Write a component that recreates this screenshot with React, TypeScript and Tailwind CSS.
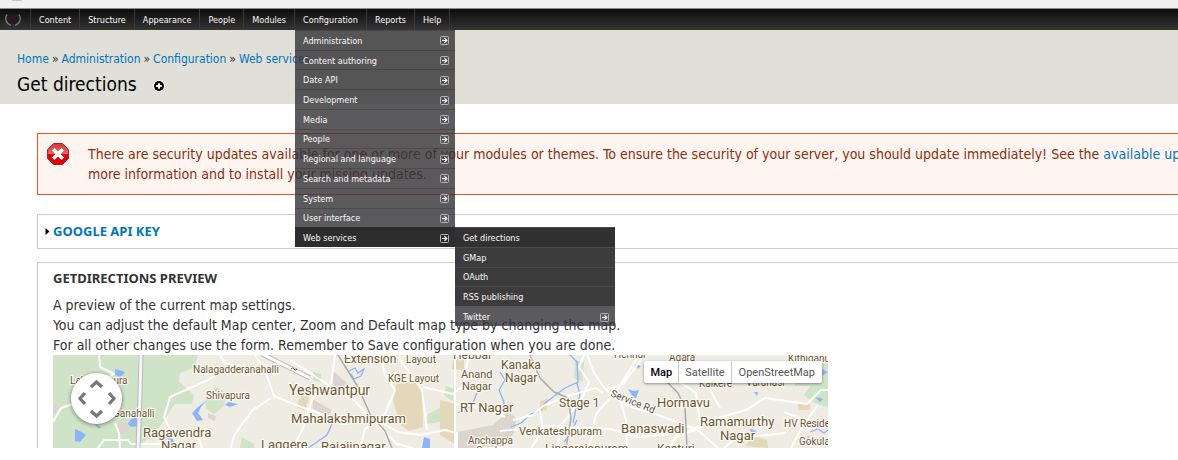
import React from "react";

const topItems = ["Content", "Structure", "Appearance", "People", "Modules", "Configuration", "Reports", "Help"];

const configItems = [
  "Administration",
  "Content authoring",
  "Date API",
  "Development",
  "Media",
  "People",
  "Regional and language",
  "Search and metadata",
  "System",
  "User interface",
  "Web services",
];

const serviceItems = ["Get directions", "GMap", "OAuth", "RSS publishing", "Twitter"];

const crumbs = ["Home", "Administration", "Configuration", "Web services"];

function Arrow() {
  return (
    <svg className="size-[9px] shrink-0" viewBox="0 0 9 9" fill="none" aria-hidden="true">
      <rect x="0.5" y="0.5" width="8" height="8" rx="1" stroke="#b4b4b6" />
      <path d="M2 4.5h4" stroke="#fff" />
      <path d="M4.5 2.2 6.8 4.5 4.5 6.8" stroke="#fff" strokeWidth="1.1" />
    </svg>
  );
}

function ServicesMenu() {
  return (
    <ul className="absolute bottom-0 left-full grid h-[99px] w-40 translate-y-[79px] grid-rows-5">
      {serviceItems.map((item, i) => (
        <li
          key={item}
          className={
            "flex border-t " +
            (i === 0
              ? "border-[#484848] bg-[#2d2d2d]/98"
              : i === 4
                ? "border-[#5a5a5c] bg-[#323236]/80"
                : "border-[#4c4c4c] bg-[#383838]/98")
          }
        >
          <a href="#" className="flex grow items-center justify-between pt-px pr-1.5 pl-2">
            {item}
            {i === 4 && <Arrow />}
          </a>
        </li>
      ))}
    </ul>
  );
}

function ConfigMenu() {
  return (
    <ul className="absolute top-full left-0 z-10 grid h-[217px] w-40 grid-rows-11">
      {configItems.map((item, i) => {
        const open = i === 10;
        return (
          <li
            key={item}
            className={
              "relative flex border-t " +
              (open ? "border-[#2d2d2d] bg-[#2d2d2d]" : "border-[#3c3c3e]/50 bg-[#323236]/80")
            }
          >
            <a href="#" className="flex grow items-center justify-between pt-px pr-1.5 pl-2">
              {item}
              <Arrow />
            </a>
            {open && <ServicesMenu />}
          </li>
        );
      })}
    </ul>
  );
}

function AdminBar() {
  return (
    <nav className="flex h-[21px] bg-linear-to-b from-[#0d0d0d] to-[#363636] text-[9px] leading-4 text-[#fafafa]">
      <a href="#" aria-label="Home" className="flex w-[30px] items-center pl-[5px]">
        <svg className="h-3 w-4" viewBox="0 0 16 12" fill="none" aria-hidden="true">
          <path d="M3 1h10v4c0 3-2 5-5 5s-5-2-5-5z" fill="#221c22" />
          <path d="M2.2 0.5C-0.6 4 0.6 9.5 6 11.3M13.8 0.5C16.6 4 15.4 9.5 10 11.3" stroke="#777777" strokeWidth="1.3" />
        </svg>
      </a>
      <ul className="flex border-r border-[#3a3a3a]">
        {topItems.map((item) => (
          <li key={item} className="relative flex border-l border-[#3a3a3a]">
            <a href="#" className="flex items-center px-2">
              {item}
            </a>
            {item === "Configuration" && <ConfigMenu />}
          </li>
        ))}
      </ul>
    </nav>
  );
}

function PageHeader() {
  return (
    <header className="h-[74px] bg-[#e0e0d8] px-[17px] pt-5">
      <p className="flex gap-[3px] text-[12px] leading-[18px] text-[#333]">
        {crumbs.map((c, i) => (
          <React.Fragment key={c}>
            {i > 0 && <span>»</span>}
            <a href="#" className="text-[#0074bd]">
              {c}
            </a>
          </React.Fragment>
        ))}
      </p>
      <div className="flex items-center gap-4 pt-1">
        <h1 className="text-[19px] leading-6 text-black">Get directions</h1>
        <button type="button" aria-label="Add to shortcuts" className="pt-1">
          <svg className="size-3" viewBox="0 0 12 12" aria-hidden="true">
            <circle cx="6" cy="6" r="6" fill="#fff" />
            <circle cx="6" cy="6" r="5" fill="#000" />
            <path d="M6 3.2v5.6M3.2 6h5.6" stroke="#fff" strokeWidth="2" />
          </svg>
        </button>
      </div>
    </header>
  );
}

function ErrorIcon() {
  return (
    <svg className="mt-[9px] size-[22px] shrink-0" viewBox="0 0 22 22" aria-hidden="true">
      <defs>
        <linearGradient id="stop" x1="0" y1="0" x2="0" y2="1">
          <stop offset="0" stopColor="#d23a3a" />
          <stop offset="0.5" stopColor="#e06a6a" />
          <stop offset="0.52" stopColor="#cf0d0d" />
          <stop offset="1" stopColor="#e00000" />
        </linearGradient>
      </defs>
      <path d="M6.6.5h8.8l6.1 6.1v8.8l-6.1 6.1H6.6L.5 15.4V6.6z" fill="url(#stop)" stroke="#c41a1a" />
      <path d="m6.2 6.2 9.6 9.6m0-9.6-9.6 9.6" stroke="#fff" strokeWidth="3.6" />
    </svg>
  );
}

type Label = [string, number, number, number];

const labels: Label[] = [
  ["Nalagadderanahalli", 193, 373, 10],
  ["Shivapura", 206, 398.5, 10],
  ["Lakshmipura", 70, 384, 10],
  ["Ganahalli", 113, 416.5, 10],
  ["Ragavendra", 143, 437, 13],
  ["Nagar", 161, 450, 13],
  ["Extension", 344, 362.5, 12],
  ["Layout", 406, 363, 10],
  ["KGE Layout", 388, 381.5, 10],
  ["Yeshwantpur", 289, 395, 14],
  ["Mahalakshmipuram", 291, 423, 13],
  ["Laggere", 261, 449, 13],
  ["Rajajinagar", 321, 451, 13],
  ["Hebbal", 453, 358.5, 12],
  ["Kanaka", 501, 369, 12],
  ["Nagar", 505, 382, 12],
  ["Anand", 461, 378, 11],
  ["Nagar", 462, 390, 11],
  ["RT Nagar", 460, 411.5, 13],
  ["Stage 1", 559, 406.5, 12],
  ["Venkateshpuram", 519, 434.5, 11],
  ["Anchappa", 468, 444, 10],
  ["Garden", 476, 454, 10],
  ["Lingarajapuram", 545, 453, 12],
  ["Hennur", 614, 358, 10],
  ["Agara", 669, 361, 10],
  ["Kithiganur", 788, 362, 10],
  ["Kalkere", 699, 387, 10],
  ["Varanasi", 746, 386, 10],
  ["Hormavu", 657, 406.5, 13],
  ["Banaswadi", 621, 433, 13],
  ["Ramamurthy", 700, 426, 13],
  ["Nagar", 720, 440, 13],
  ["HV Residency", 784, 427, 10],
  ["Gokula", 799, 445, 10],
  ["Kasturi", 657, 453, 12],
];

function MapDrawing() {
  return (
    <svg
      className="block h-[93px] w-full bg-[#efece3]"
      viewBox="53 355 775 93"
      preserveAspectRatio="xMinYMin slice"
      fill="none"
      role="img"
      aria-label="Map of Bangalore"
    >
      <g fill="#cfe3c6">
        <path d="M53 355h85v93H53z" />
        <path d="M142 355h56l-4 13-14 5-1 9 15 13-2 9-17 0-11 16-8 12-17 14-9 2zM205 395l12-8 10 7-3 12-10 8-8-5zM811 355h17v52l-14-4-10-8 7-10zM795 362h18v24h-18zM428 414l12-6v14l-13 2zM53 440l18 8H53zM242 437l12 7 0 4h-14zM313 372l8 2v8l-8-2zM446 386l8 3-1 12-9-6zM575 360l9 2-2 20-8-4z" />
      </g>
      <g fill="#e3d9b8">
        <path d="M396 384l18-3 8 6 1 40-14 4-8-6-5-14-3-10zM301 396l8 1-4 14-9-4zM453 358l11 2v10l-12-1zM440 400l15 4v40l-15-9zM540 402l8-4-1 12-7 2zM745 446l8-10 14 4 1 8zM798 404h12v6h-12z" />
      </g>
      <g fill="#dcd5ce">
        <path d="M332 370l16 14 9 13-14-3-10-9zM53 402l6 4-2 8-4-1zM118 423h11v10h-11zM493 425l15-13 8 6-2 15-14 15h-44l1-16 11-2zM312 399l20 11-3 6-16-7zM208 413l8 3-1 5-7-3zM658 371l24-1 7 9-14 2z" />
      </g>
      <g fill="#8bb4ff">
        <path d="M115 369l8 2 2 2-5 4-5-2zM75 429l7 3 4 3-6 7-5-1zM130 420l5-3 4 2v7l-8 1-3-3zM207 400l-9 7-6 6 5 8 6-1-5-7 3-6zM228 402l10 2-8 3-5-2zM424 437l6 2v9h-8zM94 423l7 4-2 2zM168 438l5 1 2 7-6-1zM628 389l5 2 6-1-3 8-3-1zM754 392l4 0-1 4zM815 397l8 2-3 3zM635 364l6 2-3 3zM820 368l8 4-6 4zM750 429l7 2-6 2zM690 402l6 2-4 3z" />
      </g>
      <g stroke="#8bb4ff" strokeWidth="1.3">
        <path d="M349 371l6-3 3 5 6-4-3 7-7 3-3-5M332 424l-5 11-10 7-9 6M500 372l5 8-6 10 5 12-2 10M545 403l-5 8-9 3-10 9-10 4M545 403l20-15 13-6-1-20-8-8M577 383l3 12-5 18-2 10M577 420l-8 16-5 6M478 390l-6 16-14 7" />
        <path d="M810 432l8-3 6 4 4-3M805 442l4-6" />
      </g>
      <g stroke="#fff" strokeWidth="2" strokeLinejoin="round">
        <path d="M99 355l1 12 14 7-12 8M53 422l8-14 15-5 22-16M115 423l4 10 1 15M98 448l6-8 24 0 3 4h60M202 448l-3-9-30-12-5-10 6-20 38-17 18-12M220 355l5 8 22 5M231 448l3-12 8-12 11-14 18-12M255 355l10 15 9 26 27 11 24 8 16 9 40-3M335 355l-4 30-18 12-10 31-10 20M380 355l5 20 10 15-10 24-20 15-5 19M382 423l16 9 22 3 25-5 12 3v15M398 357l24 33 5 40M423 387l30 7M290 360l40 26 25 15 15 17 13 12 14 14 16 4M455 355v93M453 394l10-8 5-28M456 403l34 7 15 7M513 420l20-5 10-9 25-10 28-8 7 5M584 355l-5 12 10 15-6 14-22 30-4 22M587 355l7 18 12 17 17-6 20-27M606 390l22 16 30 9 40 15 20 18M638 357l-21 33-21 24-7 34M620 400l6 20 1 28M500 431l50-5 60 3 30 8 44-5M655 365l20 14 21 14 5 35-25 9-7 11M688 432l23-12 35-10 19-12 42 6 14-14 7 0M720 408l-12-22M818 405l-14 19-13 24M784 412l24 9 20 1M724 448l12-10 50-5M540 410l3 20-12 18" />
      </g>
      <g strokeLinejoin="round">
        <path d="M141 355l-1 40-2 53" stroke="#b9b6bb" strokeWidth="5" />
        <path d="M141 355l-1 40-2 53" stroke="#f6f4f6" strokeWidth="3" />
        <path d="M262 354l48 24" stroke="#bdbdbd" strokeWidth="5" />
        <path d="M262 354l48 24" stroke="#fff" strokeWidth="3" />
        <path d="M338 355l20 32 12 27 15 17 7 17M530 355l10 23 14 14 14 6 3 20-5 30M660 375l18 18 7 15 2 40" stroke="#aaa8aa" strokeWidth="1.5" />
        <path d="M291 369q2-2 3 0t3 0" stroke="#6d5836" />
      </g>
      <g
        fill="#6d5836"
        stroke="#fbf9f2"
        strokeWidth="2.4"
        strokeLinejoin="round"
        paintOrder="stroke"
        fontFamily="Roboto, sans-serif"
      >
        {labels.map(([text, x, y, size]) => (
          <text key={text + x} x={x} y={y} fontSize={size}>
            {text}
          </text>
        ))}
        <text x="610" y="396" fontSize="10" fill="#555" transform="rotate(22 610 396)">
          Service Rd
        </text>
      </g>
    </svg>
  );
}

function PanControl() {
  return (
    <div className="absolute top-[18px] left-[18px] rounded-full bg-white shadow-[0_1px_4px_rgba(0,0,0,0.45)]">
      <svg className="size-[51px]" viewBox="0 0 51 51" fill="none" stroke="#777" strokeWidth="3.2" aria-hidden="true">
        <path d="M20 14 25.5 9l5.5 5M20 38l5.5 5 5.5-5M14 20l-5 5.5 5 5.5M38 20l5 5.5-5 5.5" />
      </svg>
    </div>
  );
}

function MapTypes() {
  return (
    <div className="absolute top-1.5 right-1.5 flex divide-x divide-[#c8c8c8] rounded-xs bg-white font-[Roboto,sans-serif] text-[11px] leading-[21px] text-[#565656] shadow-[0_1px_3px_rgba(0,0,0,0.4)]">
      <button type="button" className="px-1.5 pt-px font-medium text-black">
        Map
      </button>
      <button type="button" className="px-1.5 pt-px">
        Satellite
      </button>
      <button type="button" className="px-[7px] pt-px">
        OpenStreetMap
      </button>
    </div>
  );
}

export default function App() {
  return (
    <div className="overflow-hidden bg-white font-['DejaVu_Sans_Condensed','DejaVu_Sans',sans-serif] text-[14px] leading-5 text-[#333]">
      <div className="h-[9px] border-b border-[#8c8c8c] bg-[#f0f0f0] pl-3">
        <div className="h-px w-[10px] rounded-b-full bg-[#c4c4c4]" />
      </div>
      <AdminBar />
      <PageHeader />
      <main className="-mr-10 flex flex-col pt-[29px] pl-[37px]">
        <section className="flex gap-[19px] border border-[#ed541d] bg-[#fef5f1] pl-[9px] whitespace-nowrap text-[#8c2e0b]">
          <ErrorIcon />
          <p className="py-2.5">
            There are security updates available for one or more of your modules or themes. To ensure the security of your
            server, you should update immediately! See the{" "}
            <a href="#" className="text-[#0074bd]">
              available updates
            </a>{" "}
            page for
            <br />
            more information and to install your missing updates.
          </p>
        </section>
        <section className="mt-[19px] border border-[#ccc] px-[7px] pt-1.5 pb-[7px]">
          <a href="#" className="flex items-center gap-[3px] font-['Noto_Sans',sans-serif] text-[13px] font-bold text-[#0074bd]">
            <svg className="h-[7px] w-[5px]" viewBox="0 0 5 7" aria-hidden="true">
              <path d="M0.5 0 4.5 3.5 0.5 7z" fill="#000" />
            </svg>
            GOOGLE API KEY
          </a>
        </section>
        <section className="mt-[13px] border border-b-0 border-[#ccc] px-[15px] pt-[5px]">
          <h2 className="font-['Noto_Sans',sans-serif] text-[13px] font-bold">GETDIRECTIONS PREVIEW</h2>
          <p className="pt-[7px]">
            A preview of the current map settings.
            <br />
            You can adjust the default Map center, Zoom and Default map type by changing the map.
            <br />
            For all other changes use the form. Remember to Save configuration when you are done.
          </p>
          <div className="relative w-[775px] max-w-full overflow-hidden">
            <MapDrawing />
            <PanControl />
            <MapTypes />
          </div>
        </section>
      </main>
    </div>
  );
}
